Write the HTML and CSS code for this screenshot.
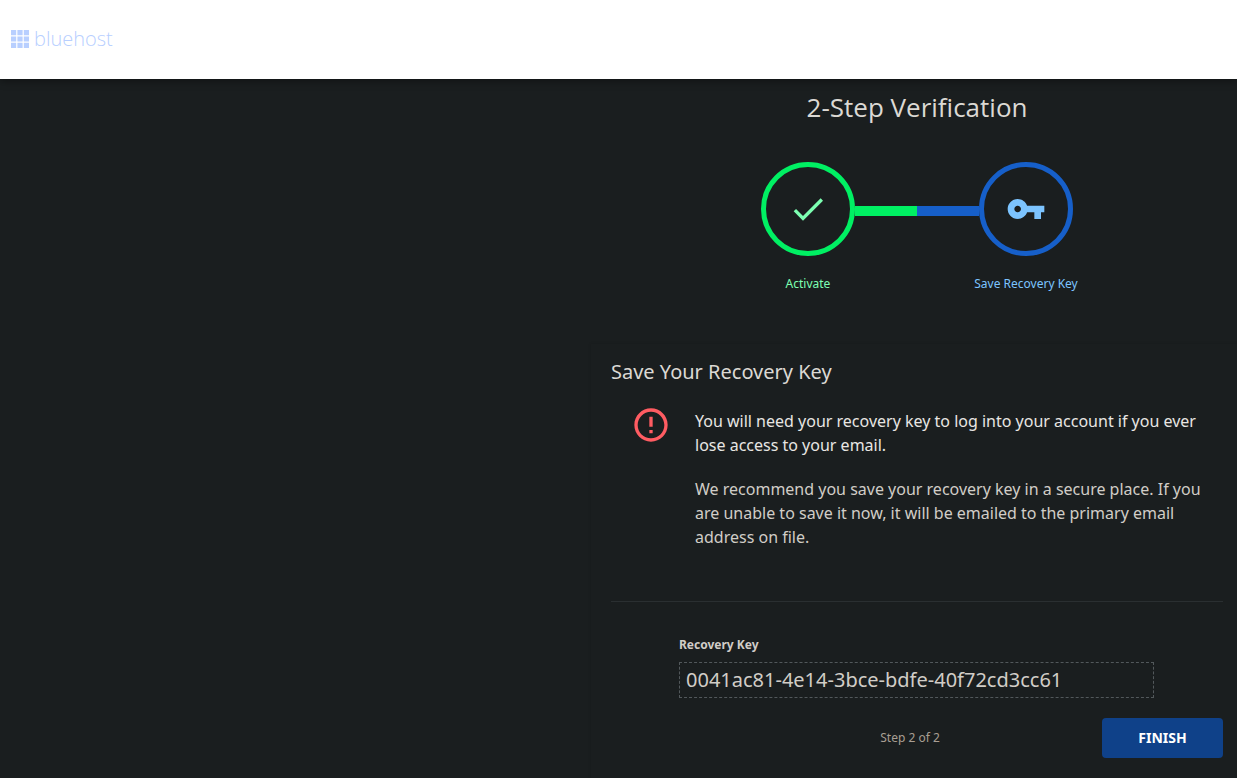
FILE: index.html
```
<!DOCTYPE html>
<html lang="en">
<head>
<meta charset="utf-8">
<title>2-Step Verification</title>
<link rel="stylesheet" href="styles.css">
</head>
<body>
<header class="site-header">
  <a class="brand" href="#" aria-label="bluehost">
    <svg class="brand-mark" viewBox="0 0 18 18" aria-hidden="true">
      <path d="M0 0h5.200v5.200H0zM6.400 0h5.200v5.200H6.400zM12.800 0H18v5.200h-5.200zM0 6.400h5.200v5.200H0zM6.400 6.400h5.200v5.200H6.400zM12.800 6.400H18v5.200h-5.200zM0 12.800h5.200V18H0zM6.400 12.800h5.200V18H6.400zM12.800 12.800H18V18h-5.200z"/>
    </svg>
    <span class="brand-name">bluehost</span>
  </a>
</header>
<main class="page">
  <section class="content">
    <h1 class="title">2-Step Verification</h1>
    <div class="steps">
      <div class="step step-done">
        <span class="step-circle">
          <svg class="step-icon" viewBox="0 0 24 24" aria-hidden="true"><path d="M9 16.170 4.830 12l-1.420 1.410L9 19 21 7l-1.410-1.410z"/></svg>
        </span>
        <span class="step-label">Activate</span>
      </div>
      <div class="connector"></div>
      <div class="step step-current">
        <span class="step-circle">
          <svg class="step-icon" viewBox="0 0 24 24" aria-hidden="true"><path d="M12.650 10C11.830 7.670 9.610 6 7 6c-3.310 0-6 2.690-6 6s2.690 6 6 6c2.610 0 4.830-1.670 5.650-4H17v4h4v-4h2v-4H12.650zM7 14c-1.100 0-2-.9-2-2s.9-2 2-2 2 .9 2 2-.9 2-2 2z"/></svg>
        </span>
        <span class="step-label">Save Recovery Key</span>
      </div>
    </div>
    <form class="card">
      <h2 class="card-title">Save Your Recovery Key</h2>
      <div class="notice">
        <svg class="notice-icon" viewBox="0 0 24 24" aria-hidden="true"><path d="M11 15h2v2h-2zm0-8h2v6h-2zm.990-5C6.470 2 2 6.480 2 12s4.470 10 9.990 10C17.520 22 22 17.520 22 12S17.520 2 11.990 2zM12 20c-4.420 0-8-3.580-8-8s3.580-8 8-8 8 3.580 8 8-3.580 8-8 8z"/></svg>
        <div class="notice-text">
          <p class="notice-main">You will need your recovery key to log into your account if you ever lose access to your email.</p>
          <p>We recommend you save your recovery key in a secure place. If you are unable to save it now, it will be emailed to the primary email address on file.</p>
        </div>
      </div>
      <hr class="divider">
      <div class="field">
        <label class="field-label" for="recovery-key">Recovery Key</label>
        <input class="field-input" id="recovery-key" type="text" readonly value="0041ac81-4e14-3bce-bdfe-40f72cd3cc61">
      </div>
      <div class="actions">
        <span class="progress">Step 2 of 2</span>
        <button class="finish" type="button">FINISH</button>
      </div>
    </form>
  </section>
</main>
</body>
</html>
```
FILE: styles.css
```
* { box-sizing: border-box; }

body {
  margin: 0;
  min-height: 100vh;
  display: flex;
  flex-direction: column;
  background: #1a1e1f;
  color: #d1cdc7;
  font: 16px/24px "Noto Sans", "Open Sans", sans-serif;
}

h1, h2, p { margin: 0; }

.site-header {
  position: relative;
  display: flex;
  align-items: center;
  height: 79px;
  padding: 0 11px 2px;
  background: #fff;
  box-shadow: 0 2px 8px rgba(0, 0, 0, 0.4);
}

.brand {
  display: flex;
  align-items: center;
  gap: 5px;
  color: #b8cfff;
  text-decoration: none;
}

.brand-mark { width: 18px; height: 18px; fill: currentColor; }

.brand-name { font: 300 20px/24px "Open Sans", sans-serif; }

.page {
  flex: 1;
  display: grid;
  grid-template-columns: minmax(0, 591fr) minmax(0, 646fr);
}

.content {
  grid-column: 2;
  display: flex;
  flex-direction: column;
  padding-top: 8px;
}

.title {
  padding: 0 14px 0 20px;
  text-align: center;
  font-family: "Open Sans", "Noto Sans", sans-serif;
  font-size: 26px;
  line-height: 40px;
  font-weight: 400;
  color: #dcd9d4;
}

.steps {
  display: flex;
  justify-content: center;
  padding: 35px 14px 50px 20px;
}

.step {
  display: flex;
  flex-direction: column;
  align-items: center;
  gap: 18px;
  width: 94px;
}

.step-circle {
  display: grid;
  place-items: center;
  width: 94px;
  height: 94px;
  border: 5px solid;
  border-radius: 50%;
}

.step-icon { width: 40px; height: 40px; fill: currentColor; }

.step-label {
  font-size: 12px;
  line-height: 20px;
  white-space: nowrap;
}

.step-done { color: #7dffb2; }
.step-done .step-circle { border-color: #00f063; }

.step-current { color: #7cc4ff; }
.step-current .step-circle { border-color: #165fc9; }

.connector {
  width: 124px;
  height: 10px;
  margin-top: 44px;
  background: linear-gradient(to right, #00f063 50%, #165fc9 50%);
}

.card {
  flex: 1;
  padding: 12px 14px 20px 20px;
  box-shadow: 0 0 3px rgba(0, 0, 0, 0.15);
}

.card-title {
  font-size: 20px;
  line-height: 32px;
  font-weight: 400;
  color: #dcd9d4;
}

.notice {
  display: flex;
  align-items: flex-start;
  gap: 24px;
  padding: 17px 0 52px 20px;
}

.notice-icon { flex: none; width: 40px; height: 40px; fill: #ff5c62; }

.notice-text {
  display: flex;
  flex-direction: column;
  gap: 20px;
  padding-top: 4px;
}

.notice-main { color: #e8e6e3; }

.divider {
  height: 1px;
  margin: 0;
  border: 0;
  background: #2a2f31;
}

.field {
  display: flex;
  flex-direction: column;
  gap: 7px;
  padding: 33px 69px 20px 68px;
}

.field-label {
  font-size: 12px;
  line-height: 20px;
  font-weight: 700;
}

.field-input {
  width: 100%;
  height: 36px;
  padding: 0 6px 2px;
  border: 1px dashed #52585b;
  background: transparent;
  color: #d1cdc7;
  font: 20px/28px "Noto Sans", "Open Sans", sans-serif;
}

.actions {
  display: grid;
  grid-template-columns: 1fr auto 1fr;
  align-items: center;
}

.progress {
  grid-column: 2;
  padding-right: 14px;
  font-size: 12px;
  line-height: 20px;
  color: #a89e93;
}

.finish {
  justify-self: end;
  width: 121px;
  height: 40px;
  border: 0;
  border-radius: 4px;
  background: #0f4189;
  color: #fff;
  font: 700 14px/20px "Noto Sans", "Open Sans", sans-serif;
}
```
